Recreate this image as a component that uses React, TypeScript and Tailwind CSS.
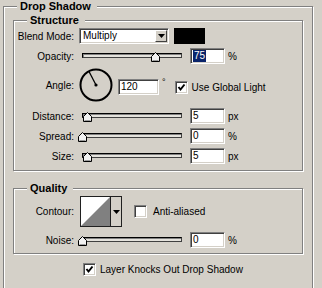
import React from "react";

const Group = ({
  title,
  className,
  children,
}: {
  title: string;
  className?: string;
  children: React.ReactNode;
}) => (
  <fieldset
    className={`border border-[#808080] shadow-[1px_1px_0_#fff,inset_1px_1px_0_#fff] ${className ?? ""}`}
  >
    <legend className="ml-[13px] bg-[#d4d0c8] pl-[3px] pr-[6px] text-[11px] font-bold leading-[12px]">
      {title}
    </legend>
    {children}
  </fieldset>
);

const Row = ({
  label,
  className,
  children,
}: {
  label: string;
  className?: string;
  children: React.ReactNode;
}) => (
  <div className={`flex items-center ${className ?? ""}`}>
    <span className="w-[60px] shrink-0 whitespace-nowrap text-right">{label}</span>
    <div className="ml-[5px] flex items-center">{children}</div>
  </div>
);

// sunken white text box
const Box = ({ className, children }: { className?: string; children?: React.ReactNode }) => (
  <div
    className={`flex h-[16px] shrink-0 items-center border border-b-white border-l-[#808080] border-r-white border-t-[#808080] bg-white pl-[2px] leading-none shadow-[inset_1px_1px_0_#404040,inset_-1px_-1px_0_#d4d0c8] ${className ?? ""}`}
  >
    {children}
  </div>
);

const Slider = ({ thumb }: { thumb: string }) => (
  <div className="relative h-[16px] w-[107px] shrink-0">
    <div className="ml-[3px] mt-[5px] h-[5px] w-[100px] border border-b-[#404040] border-l-black border-r-[#404040] border-t-black bg-[#e4e2dc] shadow-[inset_1px_1px_0_#808080]" />
    <svg width="9" height="10" viewBox="0 0 9 10" className={`absolute top-[4px] ${thumb}`}>
      <polygon points="4.5,0.5 8.5,4.5 8.5,9.5 0.5,9.5 0.5,4.5" fill="#f2f2f2" stroke="#000" />
      <line x1="1.5" y1="8.5" x2="7.5" y2="8.5" stroke="#9a9a9a" />
    </svg>
  </div>
);

const SliderRow = ({
  label,
  thumb,
  value,
  unit,
  className,
}: {
  label: string;
  thumb: string;
  value: React.ReactNode;
  unit: string;
  className?: string;
}) => (
  <Row label={label} className={className}>
    <Slider thumb={thumb} />
    <Box className="ml-[4px] w-[35px]">{value}</Box>
    <span className="ml-[3px]">{unit}</span>
  </Row>
);

const Check = ({ checked, className }: { checked?: boolean; className?: string }) => (
  <div
    className={`h-[13px] w-[13px] shrink-0 border border-b-white border-l-[#808080] border-r-white border-t-[#808080] bg-white shadow-[inset_1px_1px_0_#404040,inset_-1px_-1px_0_#d4d0c8] ${className ?? ""}`}
  >
    {checked && (
      <svg width="11" height="11" viewBox="0 0 11 11">
        <polyline points="2.5,5 4.5,7.5 8.5,2.5" fill="none" stroke="#000" strokeWidth="2" />
      </svg>
    )}
  </div>
);

const DownArrow = () => (
  <svg width="7" height="4" viewBox="0 0 7 4">
    <polygon points="0,0 7,0 3.5,4" fill="#000" />
  </svg>
);

export default function App() {
  return (
    <div className="h-[288px] w-[322px] overflow-hidden bg-[#d4d0c8] pl-[3px] font-['Liberation_Sans',Arial,sans-serif] text-[10px] text-black">
      <Group title="Drop Shadow" className="h-[300px] w-[310px]">
        <div className="pl-[9px] pt-[2px]">
          <Group title="Structure" className="w-[290px]">
            <div className="flex flex-col pb-[6px] pt-[2px]">
              <Row label="Blend Mode:">
                <Box className="w-[90px] justify-between pr-[1px]">
                  <span className="pl-[1px]">Multiply</span>
                  <div className="flex h-[12px] w-[12px] items-center justify-center border border-b-[#404040] border-l-white border-r-[#404040] border-t-white bg-[#d4d0c8]">
                    <DownArrow />
                  </div>
                </Box>
                <div className="ml-[5px] h-[16px] w-[31px] bg-black" />
              </Row>

              <SliderRow
                className="mt-[4px]"
                label="Opacity:"
                thumb="left-[72px]"
                value={<span className="bg-[#0a246a] px-[1px] py-[1px] text-white">75</span>}
                unit="%"
              />

              <Row label="Angle:" className="mt-[4px]">
                <svg width="34" height="34" viewBox="0 0 34 34">
                  <circle cx="17" cy="17" r="15.5" fill="none" stroke="#000" strokeWidth="2" />
                  <line x1="17" y1="17" x2="10" y2="3.5" stroke="#000" strokeWidth="1.3" />
                  <circle cx="17" cy="17" r="1.6" fill="#000" />
                </svg>
                <Box className="ml-[5px] mt-[4px] w-[41px]">120</Box>
                <span className="ml-[3px] self-start pt-[10px] text-[9px] leading-none">°</span>
                <Check checked className="ml-[9px] mt-[4px]" />
                <span className="ml-[4px] mt-[4px] whitespace-nowrap">Use Global Light</span>
              </Row>

              <SliderRow className="mt-[6px]" label="Distance:" thumb="left-[4px]" value="5" unit="px" />
              <SliderRow className="mt-[4px]" label="Spread:" thumb="left-[-1px]" value="0" unit="%" />
              <SliderRow className="mt-[4px]" label="Size:" thumb="left-[4px]" value="5" unit="px" />
            </div>
          </Group>

          <Group title="Quality" className="mt-[11px] w-[290px]">
            <div className="flex flex-col pb-[5px] pt-[2px]">
              <Row label="Contour:">
                <div className="ml-[1px] flex h-[31px] w-[42px] border border-[#202020] bg-white">
                  <svg width="29" height="29" viewBox="0 0 29 29">
                    <polygon points="0,29 29,0 29,29" fill="#808080" />
                  </svg>
                  <div className="flex w-[11px] items-center justify-center border-l border-[#202020] bg-[#d4d0c8]">
                    <DownArrow />
                  </div>
                </div>
                <Check className="ml-[12px]" />
                <span className="ml-[6px]">Anti-aliased</span>
              </Row>
              <SliderRow className="mt-[5px]" label="Noise:" thumb="left-[-1px]" value="0" unit="%" />
            </div>
          </Group>

          <div className="ml-[70px] mt-[8px] flex items-center">
            <Check checked />
            <span className="ml-[4px]">Layer Knocks Out Drop Shadow</span>
          </div>
        </div>
      </Group>
    </div>
  );
}
